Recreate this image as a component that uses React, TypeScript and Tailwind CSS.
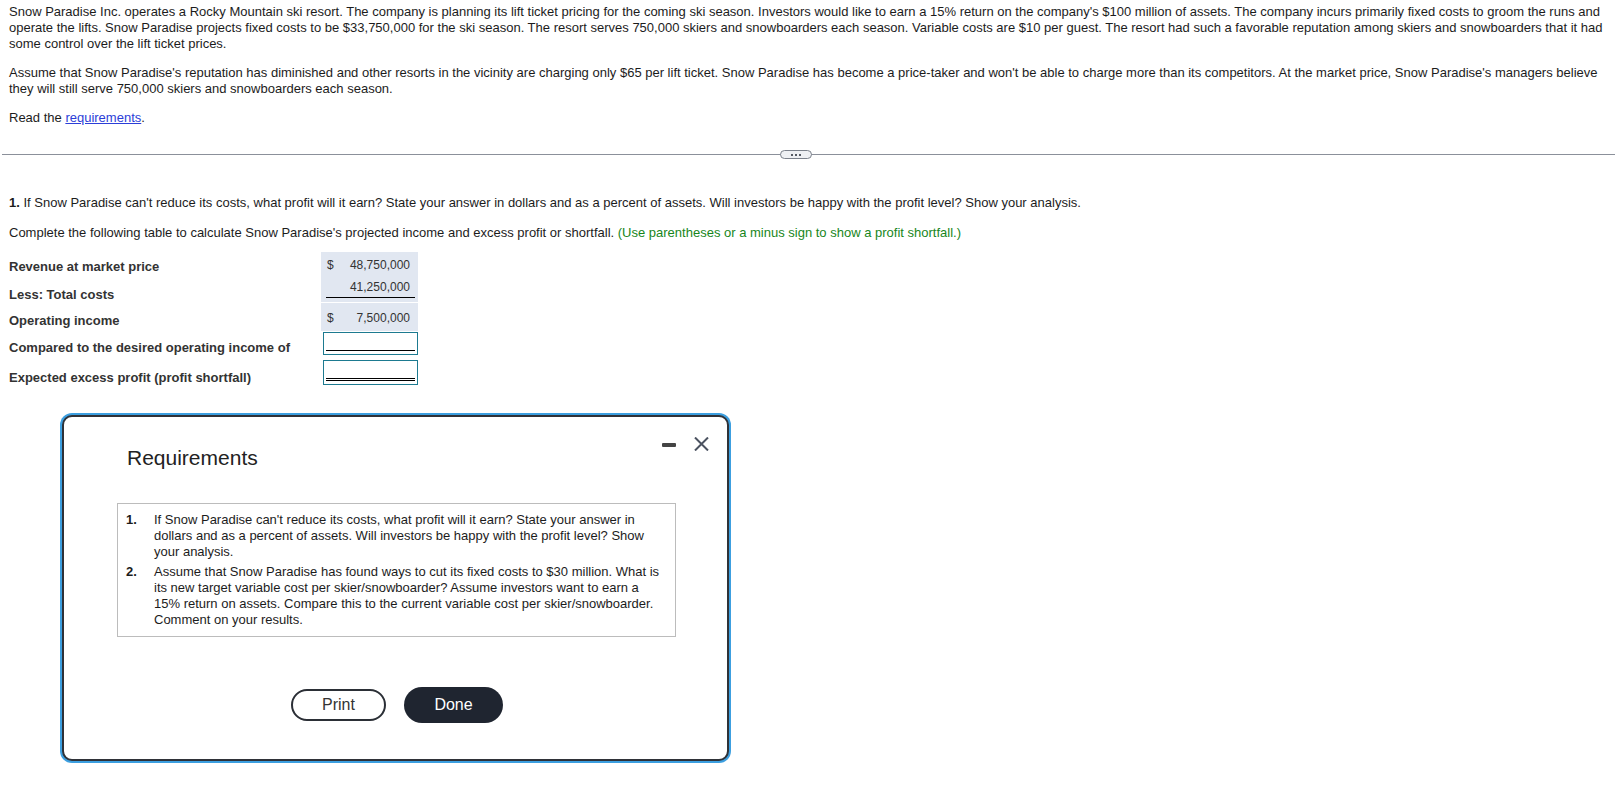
import React from "react";

function LabelCell({ children, pt }: { children: React.ReactNode; pt: string }) {
  return <div className={`${pt} text-[13px] font-bold leading-[16px] text-[#333]`}>{children}</div>;
}

export default function App() {
  return (
    <div className="relative min-h-screen bg-white font-['Liberation_Sans',Arial,sans-serif] text-[#1c1c1c]">
      <div className="px-[9px] pt-[4px] text-[13px] leading-[16px]">
        <p>
          Snow Paradise Inc. operates a Rocky Mountain ski resort. The company is planning its lift ticket pricing for the coming ski season. Investors would like to earn a 15% return on the company's $100 million of assets. The company incurs primarily fixed costs to groom the runs and operate the lifts. Snow Paradise projects fixed costs to be $33,750,000 for the ski season. The resort serves 750,000 skiers and snowboarders each season. Variable costs are $10 per guest. The resort had such a favorable reputation among skiers and snowboarders that it had some control over the lift ticket prices.
        </p>
        <p className="mt-[13px]">
          Assume that Snow Paradise's reputation has diminished and other resorts in the vicinity are charging only $65 per lift ticket. Snow Paradise has become a price-taker and won't be able to charge more than its competitors. At the market price, Snow Paradise's managers believe they will still serve 750,000 skiers and snowboarders each season.
        </p>
        <p className="mt-[13px]">
          Read the <a className="text-[#2b3ed8] underline">requirements</a>.
        </p>
      </div>

      <div className="relative ml-[2px] mt-[28px] h-px bg-[#8b909a]">
        <div className="absolute left-[778px] top-[-4px] flex h-[9px] w-[32px] items-center justify-center gap-[2px] rounded-full border border-[#7b818b] bg-[#eef0f3]">
          <span className="h-[2px] w-[2px] bg-[#555a63]" />
          <span className="h-[2px] w-[2px] bg-[#555a63]" />
          <span className="h-[2px] w-[2px] bg-[#555a63]" />
        </div>
      </div>

      <div className="mt-[40px] px-[9px] text-[13px] leading-[16px]">
        <p>
          <b>1.</b> If Snow Paradise can't reduce its costs, what profit will it earn? State your answer in dollars and as a percent of assets. Will investors be happy with the profit level? Show your analysis.
        </p>
        <p className="mt-[14px]">
          Complete the following table to calculate Snow Paradise's projected income and excess profit or shortfall.{" "}
          <span className="text-[#17861b]">(Use parentheses or a minus sign to show a profit shortfall.)</span>
        </p>
      </div>

      <div className="mt-[11px] grid grid-cols-[312px_97px] pl-[9px] text-[12px] leading-[16px] text-[#333]">
        <LabelCell pt="pt-[7px]">Revenue at market price</LabelCell>
        <div className="flex h-[24px] justify-between bg-[#e1e7f1] pl-[6px] pr-[8px] pt-[5px]">
          <span>$</span>
          <span>48,750,000</span>
        </div>

        <LabelCell pt="pt-[11px]">Less: Total costs</LabelCell>
        <div className="h-[26px] bg-[#e1e7f1] pl-[5px] pr-[3px]">
          <div className="border-b border-black pb-[2px] pr-[5px] pt-[3px] text-right">41,250,000</div>
        </div>

        <LabelCell pt="pt-[10px]">Operating income</LabelCell>
        <div className="flex h-[28px] justify-between bg-[#e1e7f1] pl-[6px] pr-[8px] pt-[7px]">
          <span>$</span>
          <span>7,500,000</span>
        </div>

        <LabelCell pt="pt-[9px]">Compared to the desired operating income of</LabelCell>
        <div className="h-[26px] pl-[2px] pt-[1px]">
          <div className="h-[23px] w-[95px] border border-[#1d7a90] px-[2px]">
            <div className="mt-[17px] h-px bg-black" />
          </div>
        </div>

        <LabelCell pt="pt-[13px]">Expected excess profit (profit shortfall)</LabelCell>
        <div className="h-[28px] pl-[2px] pt-[3px]">
          <div className="h-[25px] w-[95px] border border-[#1d7a90] px-[2px]">
            <div className="mt-[17px] h-[3px] border-y border-black" />
          </div>
        </div>
      </div>

      <div className="absolute left-[62px] top-[415px] h-[346px] w-[667px] rounded-[10px] border-2 border-[#2f3238] bg-white shadow-[0_0_0_2px_#3c9fe0]">
        <div className="relative">
          <div className="pl-[63px] pt-[29px] text-[21px] leading-[24px] text-[#222]">Requirements</div>
          <div className="absolute right-[18px] top-[20px] flex items-center gap-[18px]">
            <span className="mt-[2px] h-[4px] w-[14px] rounded-[1px] bg-[#444]" />
            <svg width="15" height="14" viewBox="0 0 15 14">
              <path d="M1 0.5 L14 13.5 M14 0.5 L1 13.5" stroke="#4b5260" strokeWidth="2" fill="none" />
            </svg>
          </div>
        </div>

        <div className="ml-[53px] mt-[33px] h-[134px] w-[559px] border border-[#bcbcbc] pb-[9px] pl-[8px] pr-[14px] pt-[8px] text-[13px] leading-[16px] text-[#1c1c1c]">
          <div className="flex">
            <span className="w-[28px] shrink-0 font-bold">1.</span>
            <span>
              If Snow Paradise can't reduce its costs, what profit will it earn? State your answer in dollars and as a percent of assets. Will investors be happy with the profit level? Show your analysis.
            </span>
          </div>
          <div className="mt-[4px] flex">
            <span className="w-[28px] shrink-0 font-bold">2.</span>
            <span>
              Assume that Snow Paradise has found ways to cut its fixed costs to $30 million. What is its new target variable cost per skier/snowboarder? Assume investors want to earn a 15% return on assets. Compare this to the current variable cost per skier/snowboarder. Comment on your results.
            </span>
          </div>
        </div>

        <div className="ml-[3px] mt-[50px] flex items-center justify-center gap-[18px] text-[16px]">
          <button className="h-[32px] w-[95px] rounded-full border-2 border-[#2b2f36] bg-white text-[#333]">Print</button>
          <button className="h-[36px] w-[99px] rounded-full bg-[#1f2530] text-white">Done</button>
        </div>
      </div>
    </div>
  );
}
